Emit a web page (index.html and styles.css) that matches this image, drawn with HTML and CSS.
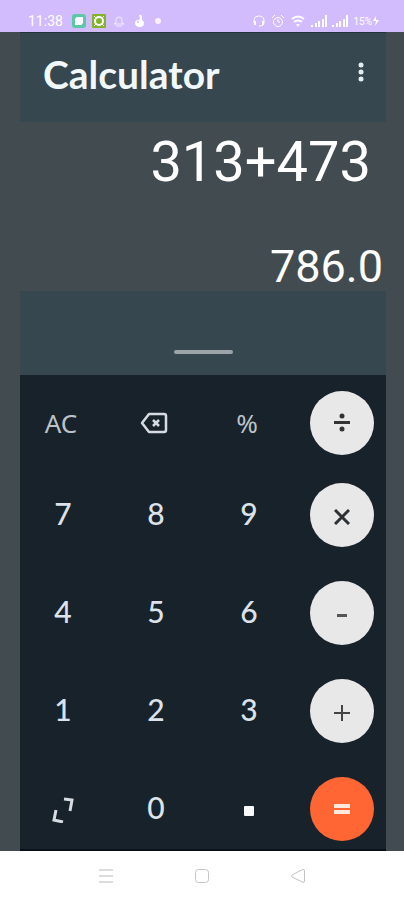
FILE: index.html
```html
<!DOCTYPE html>
<html lang="en">
<head>
<meta charset="utf-8">
<meta name="viewport" content="width=device-width, initial-scale=1">
<title>Calculator</title>
<link rel="stylesheet" href="styles.css">
</head>
<body>
<div class="status">
	<div class="status-group">
		<span class="clock">11:38</span>
		<svg width="14" height="14" viewBox="0 0 14 14"><rect width="14" height="14" rx="3" fill="#5bc9a5"/><path d="M6 3h5v5q0 3-3 3H3V6q0-3 3-3z" fill="#fff"/></svg>
		<svg width="14" height="14" viewBox="0 0 14 14"><rect width="14" height="14" rx="1" fill="#83b32b"/><circle cx="7" cy="7" r="4" fill="none" stroke="#fff" stroke-width="2"/><path d="M2 2l2 2M12 2l-2 2M2 12l2-2M12 12l-2-2" stroke="#fff"/></svg>
		<svg width="14" height="14" viewBox="0 0 14 14" fill="none" stroke="#f1e9ff"><path d="M4 9V6q0-3 3-3t3 3v3l2 1H2zM4 12h6"/></svg>
		<svg width="14" height="14" viewBox="0 0 14 14" fill="#fff"><path d="M7 1q3-1 3 2v3q2 1 2 3 0 4-4 4-5 0-5-4 0-3 4-3l1-2z"/><circle cx="6" cy="8" r="1" fill="#d3bcfd"/></svg>
		<svg width="14" height="14" viewBox="0 0 14 14"><circle cx="6" cy="7" r="3" fill="#f8f3ff"/></svg>
	</div>
	<div class="status-group right">
		<svg width="14" height="14" viewBox="0 0 14 14" fill="none" stroke="#fff"><path d="M2 9V7q0-5 5-5t5 5v2q0 3-4 3H7"/><path d="M3 7v4M11 7v4" stroke-width="2"/></svg>
		<svg width="14" height="14" viewBox="0 0 14 14" fill="none" stroke="#fff"><circle cx="7" cy="8" r="4.5"/><path d="M7 5v3h2M1 4l3-3M13 4l-3-3"/></svg>
		<svg width="16" height="14" viewBox="0 0 16 14" fill="none" stroke="#fff" stroke-width="2"><path d="M2 5q6-5 12 0M4 8q4-3 8 0"/><path d="M6 10h4l-2 3z" fill="#fff" stroke="none"/></svg>
		<svg width="16" height="14" viewBox="0 0 16 14" stroke="#fff" stroke-width="2"><path d="M1 13v-2M5 13V9M8 13V7M12 13V5M15 13V1"/></svg>
		<svg width="16" height="14" viewBox="0 0 16 14" stroke="#fff" stroke-width="2"><path d="M1 13v-2M5 13V9M8 13V7M12 13V5M15 13V1"/></svg>
		<span class="battery">15%<svg width="7" height="12" viewBox="0 0 7 12"><path d="M4 1L1 6h3l-1 5 4-6H4z" fill="#fff"/></svg></span>
	</div>
</div>

<div class="app">
	<div class="header">
		<h1>Calculator</h1>
		<button class="menu" aria-label="Menu">
			<svg width="8" height="20" viewBox="0 0 8 20" fill="#e4eef2"><circle cx="4" cy="3" r="2.5"/><circle cx="4" cy="10" r="2.5"/><circle cx="4" cy="17" r="2.5"/></svg>
		</button>
	</div>
	<div class="display">
		<div class="expression">313+473</div>
		<div class="result">786.0</div>
	</div>
	<div class="drawer"><div class="handle"></div></div>
	<div class="keypad">
		<div class="row functions">
			<button class="key">AC</button>
			<button class="key" aria-label="Delete">
				<svg width="28" height="22" viewBox="0 0 28 22" fill="none" stroke="#d7dce2" stroke-width="2.5"><path d="M9 2h15q2 0 2 2v14q0 2-2 2H9L2 11z" stroke-linejoin="round"/><path d="M13 8l6 6M19 8l-6 6"/></svg>
			</button>
			<button class="key">%</button>
			<button class="key round" aria-label="Divide">
				<svg width="16" height="20" viewBox="0 0 16 20" fill="#333"><circle cx="8" cy="3" r="2.5"/><rect y="8" width="16" height="3"/><circle cx="8" cy="16" r="2.5"/></svg>
			</button>
		</div>
		<div class="row">
			<button class="key digit">7</button>
			<button class="key digit">8</button>
			<button class="key digit">9</button>
			<button class="key round low" aria-label="Multiply">
				<svg width="16" height="16" viewBox="0 0 16 16" stroke="#2e3134" stroke-width="3"><path d="M1 1l14 14M15 1L1 15"/></svg>
			</button>
		</div>
		<div class="row">
			<button class="key digit">4</button>
			<button class="key digit">5</button>
			<button class="key digit">6</button>
			<button class="key round low" aria-label="Subtract">
				<svg width="10" height="3" viewBox="0 0 10 3"><rect width="10" height="3" fill="#555"/></svg>
			</button>
		</div>
		<div class="row">
			<button class="key digit">1</button>
			<button class="key digit">2</button>
			<button class="key digit">3</button>
			<button class="key round low" aria-label="Add">
				<svg width="16" height="16" viewBox="0 0 16 16" stroke="#444" stroke-width="2"><path d="M8 0v16M0 8h16"/></svg>
			</button>
		</div>
		<div class="row">
			<button class="key" aria-label="Expand">
				<svg width="24" height="28" viewBox="0 0 24 28" fill="none" stroke="#d7dce2" stroke-width="3"><path d="M13 4l8 1-2 11M5 15L3 25l9 2"/></svg>
			</button>
			<button class="key digit">0</button>
			<button class="key low" aria-label="Decimal point">
				<svg width="10" height="10" viewBox="0 0 10 10"><rect width="10" height="10" rx="1" fill="#f7f8fa"/></svg>
			</button>
			<button class="key round equals" aria-label="Equals">
				<svg width="16" height="10" viewBox="0 0 16 10" fill="#ffe9df"><rect width="16" height="4"/><rect y="6" width="16" height="4"/></svg>
			</button>
		</div>
	</div>
</div>

<div class="nav">
	<button aria-label="Recent apps"><svg width="16" height="16" viewBox="0 0 16 16" stroke="#dcdcdc" stroke-width="2"><path d="M1 2h14M1 8h14M1 14h14"/></svg></button>
	<button aria-label="Home"><svg width="16" height="16" viewBox="0 0 16 16" fill="none" stroke="#c6c6c6"><rect x="1.5" y="1.5" width="13" height="13" rx="3"/></svg></button>
	<button aria-label="Back"><svg width="16" height="16" viewBox="0 0 16 16" fill="none" stroke="#c2c2c2"><path d="M14.5 3v10q0 2-2 1L2 9q-1-1 0-2l10.500-5.500q2-1 2 1.500z"/></svg></button>
</div>
</body>
</html>
```
FILE: styles.css
```css
body {
	margin: 0;
	min-height: 100vh;
	display: flex;
	flex-direction: column;
	background: #424b50;
	color: #fff;
	font-family: Lato, sans-serif;
}
button {
	padding: 0;
	border: 0;
	background: none;
	color: inherit;
	font: inherit;
}
svg {
	display: block;
}
.status {
	display: flex;
	justify-content: space-between;
	height: 18px;
	padding: 14px 25px 0 28px;
	background: #d3bcfd;
	font-family: Roboto, sans-serif;
}
.status-group {
	display: flex;
	align-items: center;
	height: 14px;
	gap: 6px;
}
.status-group.right {
	gap: 5px;
}
.clock {
	font-size: 14px;
	line-height: 14px;
	margin-right: 3px;
}
.battery {
	display: flex;
	align-items: center;
	font-size: 10px;
}
.app {
	flex: 1;
	display: flex;
	flex-direction: column;
	margin: 0 18px 0 20px;
}
.header {
	display: flex;
	justify-content: space-between;
	height: 90px;
	box-sizing: border-box;
	padding: 19px 21px 0 23px;
	background: #37474f;
	border-top: 1px solid #20333d;
}
h1 {
	margin: 0;
	font-size: 39px;
	line-height: 44px;
	font-weight: bold;
	color: #f1f8fc;
}
.menu {
	height: 40px;
}
.display {
	display: flex;
	flex-direction: column;
	justify-content: space-between;
	height: 169px;
	box-sizing: border-box;
	padding-top: 10px;
	font-family: Roboto, sans-serif;
	text-align: right;
}
.expression {
	padding-right: 15px;
	font-size: 56px;
	line-height: 60px;
}
.result {
	padding-right: 3px;
	font-size: 45px;
	line-height: 48px;
}
.drawer {
	display: flex;
	justify-content: center;
	align-items: flex-end;
	height: 84px;
	background: #37474f;
}
.handle {
	width: 59px;
	height: 4px;
	margin-bottom: 21px;
	border-radius: 2px;
	background: #9aa4a9;
}
.keypad {
	flex: 1;
	display: flex;
	flex-direction: column;
	gap: 34px;
	padding: 16px 12px 8px 11px;
	background: #18222b;
	border-bottom: 2px solid #060e16;
}
.row {
	display: flex;
	justify-content: space-between;
}
.functions {
	margin-bottom: -6px;
}
.key {
	display: flex;
	align-items: center;
	justify-content: center;
	width: 64px;
	height: 64px;
	box-sizing: border-box;
	font-size: 30px;
	line-height: 32px;
	color: #dde2ea;
}
.digit {
	padding-bottom: 4px;
	font-weight: 500;
}
.functions .key {
	font-family: "Noto Sans", sans-serif;
	font-size: 26px;
	color: #bcc2c8;
}
.functions .key:not(.round) {
	padding-right: 4px;
}
.round {
	border-radius: 50%;
	background: #e8e8e8;
}
.low {
	padding-top: 4px;
}
.equals {
	background: #ff6633;
}
.nav {
	display: flex;
	justify-content: center;
	gap: 80px;
	height: 50px;
	background: #fff;
}
```
